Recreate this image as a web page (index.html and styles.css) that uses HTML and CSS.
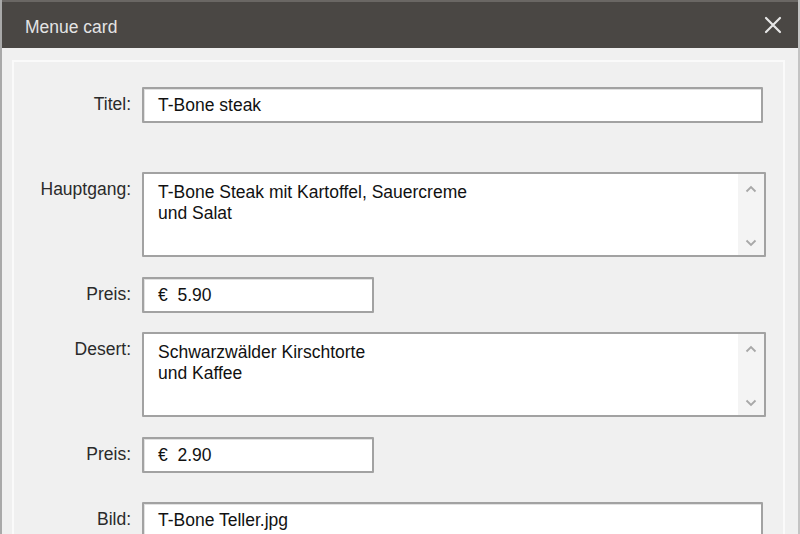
FILE: index.html
```html
<!DOCTYPE html>
<html lang="de">
<head>
<meta charset="utf-8">
<title>Menue card</title>
<link rel="stylesheet" href="styles.css">
</head>
<body>
<div class="window">
  <div class="titlebar">
    <span class="title">Menue card</span>
    <svg class="close" width="18" height="18" viewBox="0 0 18 18" aria-label="Schließen">
      <path d="M2 2 L16 16 M16 2 L2 16" stroke="#e6e6e6" stroke-width="2.2" stroke-linecap="round" fill="none"/>
    </svg>
  </div>
  <div class="body">
    <div class="panel">
      <div class="row r-titel">
        <div class="label">Titel:</div>
        <div class="field wide">T-Bone steak</div>
      </div>
      <div class="row r-haupt">
        <div class="label">Hauptgang:</div>
        <div class="area">
          <div class="area-text">T-Bone Steak mit Kartoffel, Sauercreme<br>und Salat</div>
          <div class="scroll">
            <svg width="12" height="8" viewBox="0 0 12 8"><path d="M1.5 6.5 L6 2 L10.5 6.5" stroke="#a8a8a8" stroke-width="1.8" fill="none"/></svg>
            <svg width="12" height="8" viewBox="0 0 12 8"><path d="M1.5 1.5 L6 6 L10.5 1.5" stroke="#a8a8a8" stroke-width="1.8" fill="none"/></svg>
          </div>
        </div>
      </div>
      <div class="row r-preis1">
        <div class="label">Preis:</div>
        <div class="field short">€&nbsp;&nbsp;5.90</div>
      </div>
      <div class="row r-desert">
        <div class="label">Desert:</div>
        <div class="area">
          <div class="area-text">Schwarzwälder Kirschtorte<br>und Kaffee</div>
          <div class="scroll">
            <svg width="12" height="8" viewBox="0 0 12 8"><path d="M1.5 6.5 L6 2 L10.5 6.5" stroke="#a8a8a8" stroke-width="1.8" fill="none"/></svg>
            <svg width="12" height="8" viewBox="0 0 12 8"><path d="M1.5 1.5 L6 6 L10.5 1.5" stroke="#a8a8a8" stroke-width="1.8" fill="none"/></svg>
          </div>
        </div>
      </div>
      <div class="row r-preis2">
        <div class="label">Preis:</div>
        <div class="field short">€&nbsp;&nbsp;2.90</div>
      </div>
      <div class="row r-bild">
        <div class="label">Bild:</div>
        <div class="field wide">T-Bone Teller.jpg</div>
      </div>
    </div>
  </div>
</div>
</body>
</html>
```

FILE: styles.css
```css
html, body {
  margin: 0;
  padding: 0;
  height: 100%;
  overflow: hidden;
  background: #f0f0f0;
  font-family: "Liberation Sans", Arial, sans-serif;
}

.window {
  height: 534px;
  border-left: 2px solid #a9a9a9;
  border-right: 2px solid #c4c4c4;
  box-sizing: border-box;
  background: #f0f0f0;
  display: flex;
  flex-direction: column;
}

.titlebar {
  height: 48px;
  background: #4a4744;
  border-top: 2px solid #6a6764;
  box-sizing: border-box;
  display: flex;
  align-items: center;
  justify-content: space-between;
  padding: 0 16px 0 23px;
  flex: none;
}

.title {
  color: #e4e4e4;
  font-size: 17.5px;
  padding-top: 4px;
}

.close {
  display: block;
}

.body {
  flex: 1;
  padding: 12px 13px 0 10px;
  overflow: hidden;
}

.panel {
  border: 2px solid #fafafa;
  border-bottom: none;
  height: 100%;
  box-sizing: border-box;
  padding-top: 25px;
  padding-right: 18px;
}

.row {
  display: grid;
  grid-template-columns: 117px 1fr;
  column-gap: 11px;
  align-items: start;
}

.label {
  text-align: right;
  font-size: 17.5px;
  color: #2a2a2a;
  padding-top: 7px;
  line-height: 20px;
}

.field {
  height: 36px;
  box-sizing: border-box;
  background: #fff;
  border: 2px solid #a2a2a2;
  border-radius: 1px;
  box-shadow: inset 1px 1px 0 #e2e2e2;
  padding: 1px 14px 0;
  display: flex;
  align-items: center;
  font-size: 17.5px;
  color: #111;
}

.field.wide {
  width: 621px;
}

.field.short {
  width: 232px;
}

.area {
  width: 624px;
  height: 85px;
  box-sizing: border-box;
  background: #fff;
  border: 2px solid #a2a2a2;
  border-radius: 1px;
  display: flex;
}

.area-text {
  flex: 1;
  padding: 8px 14px;
  font-size: 17.5px;
  line-height: 21px;
  color: #111;
}

.scroll {
  width: 26px;
  background: #f4f4f4;
  display: flex;
  flex-direction: column;
  align-items: center;
  justify-content: space-between;
  padding: 11px 0 8px;
  box-sizing: border-box;
}

.scroll svg {
  display: block;
}

.r-haupt { margin-top: 49px; }
.r-preis1 { margin-top: 20px; }
.r-desert { margin-top: 19px; }
.r-preis2 { margin-top: 20px; }
.r-bild { margin-top: 29px; }
```
